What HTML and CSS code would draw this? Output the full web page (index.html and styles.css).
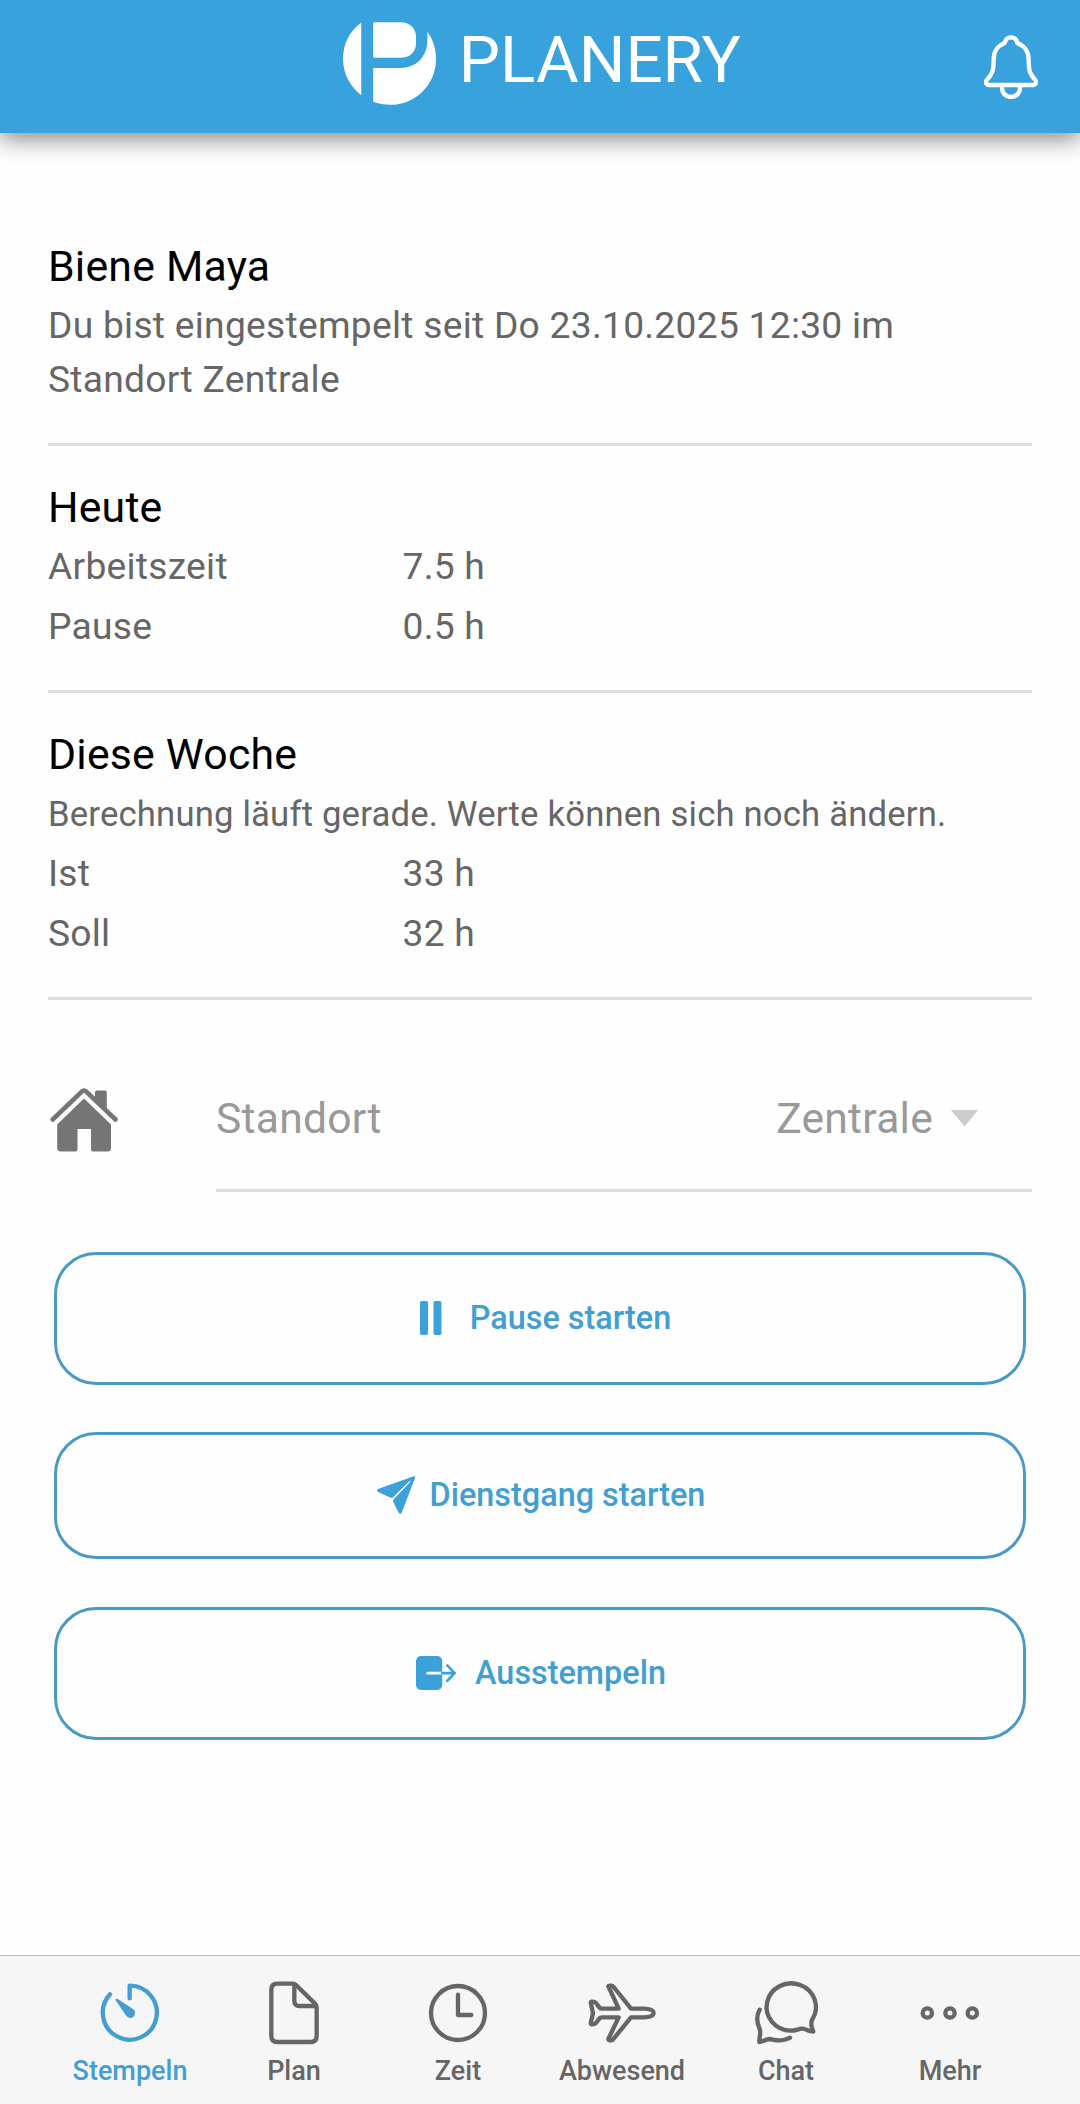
FILE: index.html
```html
<!DOCTYPE html>
<html lang="de">
<head>
<meta charset="utf-8">
<title>Planery</title>
<link rel="stylesheet" href="styles.css">
</head>
<body>
<div class="app">
  <header class="topbar">
    <div class="brand">
      <svg class="brand-mark" viewBox="68 63 280 252" fill="currentColor"><path d="M123 68C88 92 68 132 68 176S88 258 123 286Z"/><path d="M159 66H240C270 66 288 84 288 112V128C288 156 270 173 240 173H159Z"/><path d="M159 204H240C290 204 322 170 322 120V95C339 118 348 146 348 176C348 256 285 315 210 315C192 315 175 312 159 306Z"/></svg>
      <span class="brand-name">PLANERY</span>
    </div>
    <svg class="bell" viewBox="132 105 162 192" fill="none" stroke="currentColor" stroke-width="13" stroke-linejoin="round"><path d="M213 112C201 112 196 120 194 129C171 139 161 152 161 178C161 212 157 222 141 239C135 246 139 255 147 255H279C287 255 291 246 285 239C269 222 266 212 266 178C266 152 254 139 232 129C230 120 225 112 213 112Z"/><path d="M186 256V264A27 27 0 0 0 240 264V256"/></svg>
  </header>
  <main class="content">
    <section class="block">
      <h2 class="title">Biene Maya</h2>
      <p class="status">Du bist eingestempelt seit Do 23.10.2025 12:30 im Standort Zentrale</p>
    </section>
    <section class="block">
      <h2 class="title">Heute</h2>
      <div class="row"><span>Arbeitszeit</span><span>7.5 h</span></div>
      <div class="row"><span>Pause</span><span>0.5 h</span></div>
    </section>
    <section class="block">
      <h2 class="title">Diese Woche</h2>
      <p class="note">Berechnung läuft gerade. Werte können sich noch ändern.</p>
      <div class="row"><span>Ist</span><span>33 h</span></div>
      <div class="row"><span>Soll</span><span>32 h</span></div>
    </section>
    <div class="location">
      <svg class="house" viewBox="50 1087 68 66"><path fill="currentColor" d="M84 1098.5 111 1124.500V1148Q111 1151.500 107.500 1151.500H93Q91 1151.500 91 1149.500V1129H77.500V1149.500Q77.500 1151.500 75.500 1151.500H61Q57.200 1151.500 57.200 1148V1124.500ZM95 1092.500Q95 1090.500 97 1090.500H104.800Q106.800 1090.500 106.800 1092.500V1110L95 1099Z"/><path fill="none" stroke="currentColor" stroke-width="4.600" stroke-linecap="round" stroke-linejoin="round" d="M52.700 1119.500 81.500 1091.800Q84 1089.600 86.500 1091.800L115.500 1119.500"/></svg>
      <div class="field"><span>Standort</span><span class="value"><span>Zentrale</span><i class="caret"></i></span></div>
    </div>
    <div class="actions">
      <button class="btn btn-pause"><svg class="i-pause" viewBox="0 0 22 34" fill="currentColor"><rect width="8" height="34" rx="2"/><rect x="13.500" width="8" height="34" rx="2"/></svg><span>Pause starten</span></button>
      <button class="btn btn-send"><svg class="i-send" viewBox="110 229 114 114" fill="currentColor"><path d="M220 230 113 268Q107 272 112 276L151 294Q156 296 160 291L207 245Q213 241 209 247L161 298Q157 302 159 307L175 339Q180 345 184 339L224 235Q225 229 220 230Z"/></svg><span>Dienstgang starten</span></button>
      <button class="btn btn-out"><svg class="i-out" viewBox="229 769 119 101"><rect x="229" y="769" width="78" height="101" rx="15" fill="currentColor"/><path d="M264 820H307" stroke="#fff" stroke-width="8" stroke-linecap="round"/><path d="M307 820H342M322 797 344 820 322 843" fill="none" stroke="currentColor" stroke-width="8" stroke-linecap="round" stroke-linejoin="round"/></svg><span>Ausstempeln</span></button>
    </div>
  </main>
  <nav class="tabs">
    <a class="tab active"><svg viewBox="165 114 210 210" fill="none" stroke="currentColor" stroke-width="13" stroke-linecap="round" stroke-linejoin="round"><path d="M269 175V137A81 81 0 1 1 210 163"/><path fill="currentColor" stroke="none" d="M232 176Q226 174 227 181L259 228Q270 239 281 230Q290 218 280 208Z"/></svg><span>Stempeln</span></a>
    <a class="tab"><svg viewBox="657 114 210 210" fill="none" stroke="currentColor" stroke-width="13" stroke-linecap="round" stroke-linejoin="round"><path d="M712 131H759Q764 131 768 135L825 191Q830 196 830 202V288Q830 306 812 306H712Q694 306 694 288V149Q694 131 712 131Z"/><path d="M763 134V182Q763 198 779 198H827"/></svg><span>Plan</span></a>
    <a class="tab"><svg viewBox="129 114 210 210" fill="none" stroke="currentColor" stroke-width="13" stroke-linecap="round" stroke-linejoin="round"><circle cx="234" cy="219" r="81"/><path d="M234 164V225H274"/></svg><span>Zeit</span></a>
    <a class="tab"><svg viewBox="621 114 210 210" fill="none" stroke="currentColor" stroke-width="13" stroke-linecap="round" stroke-linejoin="round"><path d="M686 141Q683 137 691 137H694Q698 137 701 141L753 206H790Q821 207 821 219Q821 231 790 232H753L701 296Q698 301 694 301H691Q683 301 686 295L716 232H666Q661 232 658 236L647 250Q643 254 635 253Q631 252 633 246L639 219L633 192Q631 186 635 185Q643 184 647 188L658 202Q661 206 666 206H716Z"/></svg><span>Abwesend</span></a>
    <a class="tab"><svg viewBox="93 114 210 210" fill="none" stroke="currentColor" stroke-width="13" stroke-linecap="round" stroke-linejoin="round"><path d="M280 275C276 262 269 254 277 238A74 71 0 1 0 212 272C228 272 234 267 246 266C258 265 264 275 280 275Z"/><path d="M119 209C107 230 110 246 118 264C125 280 117 290 118 306C130 306 136 297 149 297C161 299 174 304 190 300C200 298 205 296 210 293"/></svg><span>Chat</span></a>
    <a class="tab"><svg viewBox="585 114 210 210" fill="none" stroke="currentColor" stroke-width="13"><circle cx="622" cy="219" r="14"/><circle cx="690" cy="219" r="14"/><circle cx="757" cy="219" r="14"/></svg><span>Mehr</span></a>
  </nav>
</div>
</body>
</html>
```

FILE: styles.css
```css
* { box-sizing: border-box; }
body { margin: 0; background: #fff; font-family: Roboto, "Liberation Sans", sans-serif; color: #666; }
h2, p { margin: 0; font-weight: 400; }
.app { width: 1080px; height: 2104px; display: flex; flex-direction: column; background: #fefefe; }

.topbar { height: 133px; flex: none; display: grid; grid-template-columns: 1fr auto 1fr; background: #38a2dd; color: #fff; box-shadow: 0 6px 22px rgba(0, 0, 0, .47); }
.brand { grid-column: 2; display: flex; align-items: flex-start; gap: 22.5px; margin-left: 4px; }
.brand-mark { width: 93px; height: 84px; margin-top: 21px; }
.brand-name { font-size: 65.5px; line-height: 76px; margin-top: 22px; }
.bell { justify-self: end; width: 54px; height: 64px; margin: 35px 42px 0 0; }

.content { flex: 1; padding: 72px 48px 0; }
.block { padding: 32px 0 33px; border-bottom: 3px solid #ddd; }
.title { font-size: 42.8px; line-height: 59px; letter-spacing: .2px; color: #000; }
.status { font-size: 37.2px; line-height: 54px; letter-spacing: .27px; padding: 2px 60px 4px 0; }
.row { display: grid; grid-template-columns: 354.5px 1fr; padding-bottom: 2px; font-size: 37.2px; line-height: 58px; letter-spacing: .26px; }
.note { font-size: 34.7px; line-height: 60px; letter-spacing: .17px; white-space: nowrap; }

.location { display: flex; height: 192px; }
.house { width: 68px; height: 66px; margin: 87px 0 0 2px; color: #757575; }
.field { flex: 1; margin-left: 98px; padding: 89px 53.5px 0 0; border-bottom: 3px solid #ddd; display: flex; justify-content: space-between; font-size: 42.6px; line-height: 59px; letter-spacing: .25px; color: #999; }
.value { display: flex; gap: 17.5px; }
.caret { width: 28px; height: 17px; margin-top: 20.5px; background: #ccc; clip-path: polygon(0 0, 100% 0, 50% 100%); }

.actions { display: flex; flex-direction: column; margin: 60px 6px 0; }
.btn { display: flex; align-items: center; justify-content: center; height: 133px; padding: 0 0 1px; background: none; border: 3px solid #4a9bc4; border-radius: 42px; font: 500 32.4px/48px Roboto, sans-serif; color: #429fd0; }
.btn svg { color: #3ba1d8; }
.btn-pause { padding-left: 11px; }
.btn-send { height: 127px; margin: 47px 0 48px; padding-left: 2px; }
.btn-out { padding-left: 2px; }
.i-pause { width: 22px; height: 34px; margin-right: 28px; }
.i-send { width: 38px; height: 38px; margin-right: 15px; }
.i-out { width: 40px; height: 34px; margin-right: 19px; }

.tabs { height: 149px; flex: none; display: grid; grid-template-columns: repeat(6, 164px); padding: 0 48px; border-top: 1px solid #b8bfbb; background: #f6f6f6; }
.tab { display: flex; flex-direction: column; align-items: center; gap: 5px; padding-top: 22px; font-size: 27px; line-height: 36px; font-weight: 500; color: #666; }
.tab svg { width: 70px; height: 70px; }
.tab.active { color: #449fd0; }
```
